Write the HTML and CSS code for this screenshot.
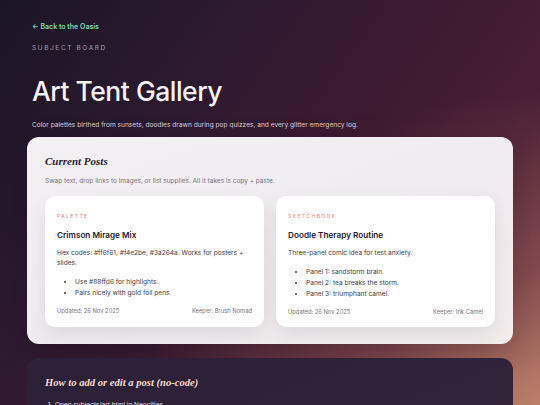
FILE: index.html
```html
<!DOCTYPE html>
<html lang="en">
<head>
<meta charset="utf-8">
<title>Art Tent Gallery</title>
<link rel="stylesheet" href="styles.css">
</head>
<body>
<main class="page">
  <header class="hero">
    <a class="back" href="#">← Back to the Oasis</a>
    <p class="eyebrow">SUBJECT BOARD</p>
    <h1 class="title">Art Tent Gallery</h1>
    <p class="lead">Color palettes birthed from sunsets, doodles drawn during pop quizzes, and every glitter emergency log.</p>
  </header>

  <section class="panel">
    <h2 class="panel-title">Current Posts</h2>
    <p class="panel-desc">Swap text, drop links to images, or list supplies. All it takes is copy + paste.</p>
    <div class="cards">
      <article class="card">
        <p class="tag">PALETTE</p>
        <h3 class="card-title">Crimson Mirage Mix</h3>
        <p class="card-body">Hex codes: #ff6f61, #f4e2be, #3a264a. Works for posters + slides.</p>
        <ul class="card-list">
          <li>Use #88ffd6 for highlights.</li>
          <li>Pairs nicely with gold foil pens.</li>
        </ul>
        <div class="card-foot"><span>Updated: 26 Nov 2025</span><span>Keeper: Brush Nomad</span></div>
      </article>
      <article class="card">
        <p class="tag">SKETCHBOOK</p>
        <h3 class="card-title">Doodle Therapy Routine</h3>
        <p class="card-body">Three-panel comic idea for test anxiety.</p>
        <ul class="card-list">
          <li>Panel 1: sandstorm brain.</li>
          <li>Panel 2: tea breaks the storm.</li>
          <li>Panel 3: triumphant camel.</li>
        </ul>
        <div class="card-foot"><span>Updated: 26 Nov 2025</span><span>Keeper: Ink Camel</span></div>
      </article>
    </div>
  </section>

  <section class="panel dark">
    <h2 class="panel-title light">How to add or edit a post (no-code)</h2>
    <ol class="steps">
      <li>Open subjects/art.html in Neocities.</li>
    </ol>
  </section>
</main>
</body>
</html>
```

FILE: styles.css
```css
* { box-sizing: border-box; }
html, body { margin: 0; padding: 0; }
body {
  width: 540px;
  height: 405px;
  overflow: hidden;
  font-family: Inter, "Noto Sans", sans-serif;
  background:
    radial-gradient(ellipse 420px 330px at 560px 420px, rgba(200,140,112,0.95) 0%, rgba(160,95,90,0.6) 45%, rgba(90,40,60,0) 100%),
    linear-gradient(125deg, #1b1525 0%, #2c1a2e 30%, #3e1a31 55%, #4a1f36 75%, #6a3a45 100%);
}
.page {
  padding: 21px 27px 0 27px;
  display: flex;
  flex-direction: column;
}
.hero { padding: 0 5px; display: flex; flex-direction: column; }
.back {
  color: #7fdcb7;
  font-size: 7px;
  font-weight: 600;
  text-decoration: none;
  line-height: 12px;
}
.eyebrow {
  margin: 10px 0 0;
  color: #a79eae;
  font-size: 6.5px;
  letter-spacing: 1.6px;
  line-height: 10px;
}
.title {
  margin: 21px 0 0;
  color: #f7f1f4;
  font-size: 26.5px;
  font-weight: 500;
  letter-spacing: -0.5px;
  line-height: 34px;
}
.lead {
  margin: 12px 0 0;
  color: #dcd2da;
  font-size: 6.6px;
  line-height: 10px;
}
.panel {
  margin-top: 7px;
  background: linear-gradient(160deg, #f4f1f4 0%, #efecef 60%, #f3eeee 100%);
  border-radius: 12px;
  padding: 16px 18px 17px;
  box-shadow: 0 10px 30px rgba(20,10,25,0.25);
}
.panel-title {
  margin: 0;
  font-family: "Liberation Serif", "DejaVu Serif", serif;
  font-style: italic;
  font-weight: 700;
  font-size: 11px;
  color: #2a2232;
  line-height: 16px;
}
.panel-desc {
  margin: 7px 0 0;
  font-size: 6.5px;
  color: #7a7280;
  line-height: 10px;
}
.cards {
  margin-top: 10px;
  display: grid;
  grid-template-columns: 1fr 1fr;
  gap: 12px;
}
.card {
  background: #ffffff;
  border-radius: 10px;
  padding: 16px 12px 10px;
  box-shadow: 0 8px 18px rgba(60,40,60,0.10);
  display: flex;
  flex-direction: column;
}
.tag {
  margin: 0;
  color: #e2867f;
  font-size: 5.2px;
  letter-spacing: 1.3px;
  line-height: 9px;
}
.card-title {
  margin: 8px 0 0;
  font-size: 8.2px;
  font-weight: 600;
  color: #272030;
  line-height: 12px;
}
.card-body {
  margin: 7px 0 0;
  font-size: 6.6px;
  color: #433b49;
  line-height: 10px;
}
.card-list {
  margin: 9px 0 0;
  padding-left: 18px;
  font-size: 6.6px;
  color: #433b49;
  line-height: 11px;
}
.card-foot {
  margin-top: 7px;
  display: flex;
  justify-content: space-between;
  font-size: 5.8px;
  color: #7c7482;
  line-height: 10px;
}
.panel.dark {
  margin-top: 14px;
  background: linear-gradient(160deg, #2b2036 0%, #33243a 100%);
  box-shadow: none;
  padding-top: 17px;
}
.panel-title.light {
  color: #f3dccd;
  font-size: 10.6px;
}
.steps {
  margin: 9px 0 0;
  padding-left: 10px;
  color: #e8dce8;
  font-size: 6.5px;
  line-height: 11px;
}
```
